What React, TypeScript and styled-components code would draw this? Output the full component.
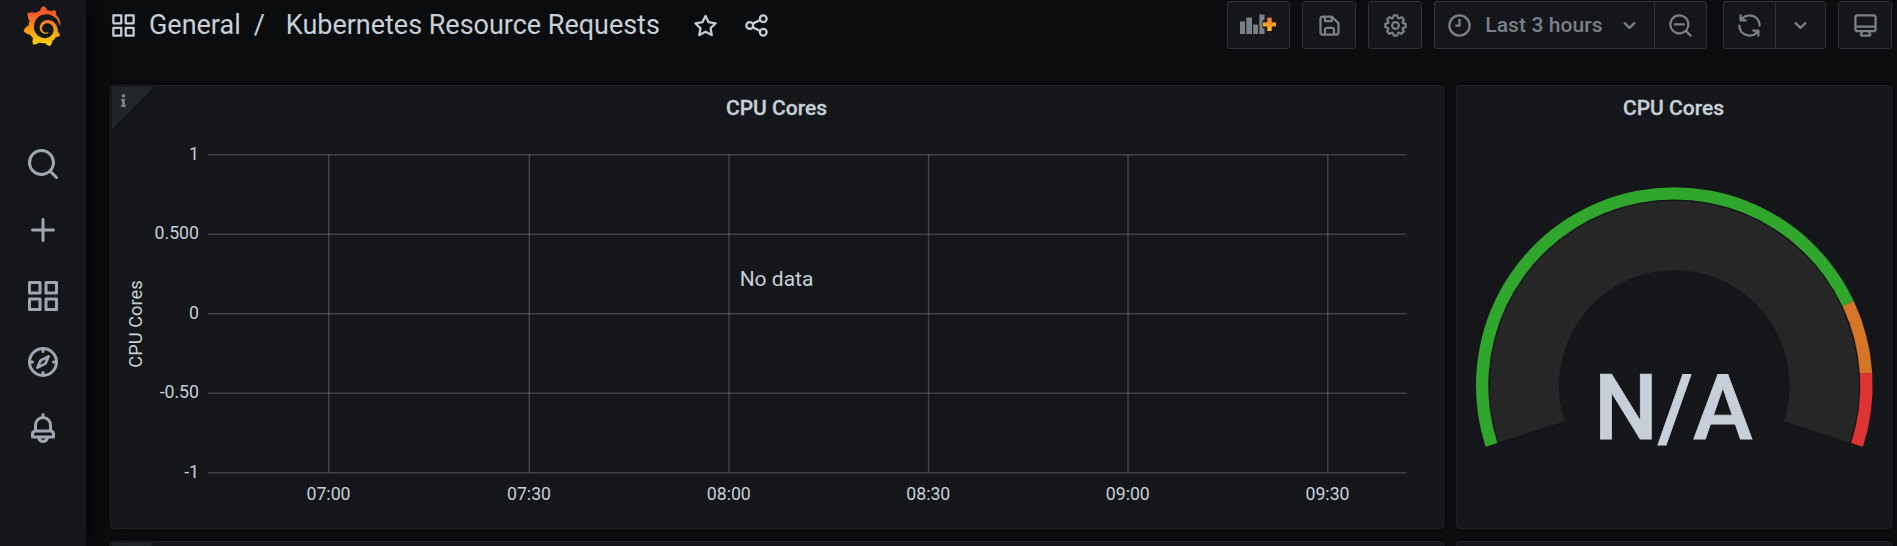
import React from 'react';
import styled, { createGlobalStyle } from 'styled-components';
import { SiGrafana } from 'react-icons/si';
import { FaInfo } from 'react-icons/fa';

const font = `Roboto, "Liberation Sans", sans-serif`;

const Global = createGlobalStyle`
  * { box-sizing: border-box; }
  body { margin: 0; background: #0b0c0e; color: #c7d0d9; font-family: ${font}; overflow: hidden; }
`;

const Layout = styled.div`
  display: flex;
  height: 546px;
  overflow: hidden;
`;

const Sidebar = styled.nav`
  position: relative;
  z-index: 1;
  flex: none;
  width: 86px;
  height: 546px;
  padding-top: 6px;
  display: flex;
  flex-direction: column;
  align-items: center;
  background: #141619;
  box-shadow: 0 0 30px #000;
`;

const Logo = styled(SiGrafana)`
  width: 40px;
  height: 40px;
  margin-right: 3px;
  margin-bottom: 85px;
  flex: none;
  path { fill: url(#logoGradient); }
`;

const Hidden = styled.svg`
  position: absolute;
  width: 0;
  height: 0;
`;

const NavItem = styled.a`
  display: grid;
  place-items: center;
  width: 86px;
  height: 66.1px;
  flex: none;
  color: #9fa7b3;
`;

const Main = styled.main`
  flex: 1;
  min-width: 0;
  padding: 0 5px 0 24px;
  display: flex;
  flex-direction: column;
`;

const Toolbar = styled.header`
  display: flex;
  align-items: flex-start;
  height: 85px;
  padding-top: 1px;
  flex: none;
`;

const Title = styled.div`
  display: flex;
  align-items: center;
  height: 48px;
  flex: 1;
  white-space: nowrap;
  font-size: 27px;
  line-height: 48px;
  letter-spacing: -0.02px;
`;

const Crumb = styled.span<{ $left: number }>`
  margin-left: ${p => p.$left}px;
`;

const TitleIcon = styled.span<{ $left: number }>`
  display: flex;
  margin-left: ${p => p.$left}px;
`;

const Button = styled.button<{ $w: number; $left?: number; $join?: 'left' | 'right' }>`
  display: flex;
  align-items: center;
  justify-content: center;
  width: ${p => p.$w}px;
  height: 48px;
  flex: none;
  margin: 0 0 0 ${p => p.$left ?? 0}px;
  padding: 0;
  border: 1px solid #2c3235;
  ${p => p.$join === 'left' && 'border-right: 0;'}
  border-radius: ${p => (p.$join === 'left' ? '3px 0 0 3px' : p.$join === 'right' ? '0 3px 3px 0' : '3px')};
  background: #141619;
  color: #7b8087;
  font: 500 21px ${font};
`;

const TimeLabel = styled.span`
  margin: 0 13px 0 12px;
  letter-spacing: 0.1px;
`;

const Grid = styled.section`
  display: grid;
  grid-template-columns: 1334px 436px;
  grid-template-rows: 444px 444px;
  gap: 12px;
`;

const Panel = styled.article`
  position: relative;
  display: flex;
  flex-direction: column;
  border: 1px solid #202226;
  border-radius: 4px;
  background: #141619;
  overflow: hidden;
`;

const PanelTitle = styled.h2`
  margin: 0 1px 0 0;
  height: 44px;
  line-height: 44px;
  text-align: center;
  font-size: 21px;
  font-weight: 500;
  -webkit-text-stroke: 0.3px currentColor;
`;

const InfoCorner = styled.div`
  position: absolute;
  top: 1px;
  left: 1px;
  width: 42px;
  height: 42px;
  padding: 7px 0 0 5px;
  background: #222529;
  clip-path: polygon(0 0, 100% 0, 0 100%);
  color: #7b8087;
  svg { display: block; width: 13px; height: 13px; }
`;

const Drawing = styled.svg`
  display: block;
  flex: none;
  font-family: ${font};
  fill: #c7d0d9;
`;

const paths = {
  search: 'M21.71,20.29,18,16.61A9,9,0,1,0,16.61,18l3.68,3.68a1,1,0,0,0,1.42,0A1,1,0,0,0,21.71,20.29ZM11,18a7,7,0,1,1,7-7A7,7,0,0,1,11,18Z',
  plus: 'M19,11H13V5a1,1,0,0,0-2,0v6H5a1,1,0,0,0,0,2h6v6a1,1,0,0,0,2,0V13h6a1,1,0,0,0,0-2Z',
  apps: 'M10,13H3a1,1,0,0,0-1,1v7a1,1,0,0,0,1,1h7a1,1,0,0,0,1-1V14A1,1,0,0,0,10,13ZM9,20H4V15H9ZM21,2H14a1,1,0,0,0-1,1v7a1,1,0,0,0,1,1h7a1,1,0,0,0,1-1V3A1,1,0,0,0,21,2ZM20,9H15V4h5Zm1,4H14a1,1,0,0,0-1,1v7a1,1,0,0,0,1,1h7a1,1,0,0,0,1-1V14A1,1,0,0,0,21,13Zm-1,7H15V15h5ZM10,2H3A1,1,0,0,0,2,3v7a1,1,0,0,0,1,1h7a1,1,0,0,0,1-1V3A1,1,0,0,0,10,2ZM9,9H4V4H9Z',
  bell: 'M18,13.18V10a6,6,0,0,0-5-5.91V3a1,1,0,0,0-2,0V4.09A6,6,0,0,0,6,10v3.18A3,3,0,0,0,4,16v2a1,1,0,0,0,1,1H8.14a4,4,0,0,0,7.72,0H19a1,1,0,0,0,1-1V16A3,3,0,0,0,18,13.18ZM8,10a4,4,0,0,1,8,0v3H8Zm4,10a2,2,0,0,1-1.72-1h3.44A2,2,0,0,1,12,20Zm6-3H6V16a1,1,0,0,1,1-1H17a1,1,0,0,1,1,1Z',
  star: 'M22,9.67A1,1,0,0,0,21.14,9l-5.69-.83L12.9,3a1,1,0,0,0-1.8,0L8.55,8.16,2.86,9a1,1,0,0,0-.81.68,1,1,0,0,0,.25,1l4.13,4-1,5.68A1,1,0,0,0,6.9,21.44L12,18.77l5.1,2.67a.93.93,0,0,0,.46.12,1,1,0,0,0,.59-.19,1,1,0,0,0,.4-1l-1-5.68,4.13-4A1,1,0,0,0,22,9.67Zm-6.15,4a1,1,0,0,0-.29.88l.72,4.2-3.76-2a1.06,1.06,0,0,0-.94,0l-3.76,2,.72-4.2a1,1,0,0,0-.29-.88l-3-3,4.21-.61a1,1,0,0,0,.76-.55L12,5.7l1.88,3.82a1,1,0,0,0,.76.55l4.21.61Z',
  share: 'M18,14a4,4,0,0,0-3.08,1.48l-5.1-2.35a3.64,3.64,0,0,0,0-2.26l5.1-2.35A4,4,0,1,0,14,6a4.17,4.17,0,0,0,.07.71L8.79,9.14a4,4,0,1,0,0,5.72l5.28,2.43A4.17,4.17,0,0,0,14,18a4,4,0,1,0,4-4ZM18,4a2,2,0,1,1-2,2A2,2,0,0,1,18,4ZM6,14a2,2,0,1,1,2-2A2,2,0,0,1,6,14Zm12,6a2,2,0,1,1,2-2A2,2,0,0,1,18,20Z',
  save: 'M20.71,9.29l-6-6a1,1,0,0,0-.32-.21A1.09,1.09,0,0,0,14,3H6A3,3,0,0,0,3,6V18a3,3,0,0,0,3,3H18a3,3,0,0,0,3-3V10A1,1,0,0,0,20.71,9.29ZM9,5h4V7H9Zm6,14H9V16a1,1,0,0,1,1-1h4a1,1,0,0,1,1,1Zm4-1a1,1,0,0,1-1,1H17V16a3,3,0,0,0-3-3H10a3,3,0,0,0-3,3v3H6a1,1,0,0,1-1-1V6A1,1,0,0,1,6,5H7V8A1,1,0,0,0,8,9h6a1,1,0,0,0,1-1V6.41l4,4Z',
  cog: 'M21.32,9.55l-1.89-.63.89-1.78A1,1,0,0,0,20.13,6L18,3.87a1,1,0,0,0-1.15-.19l-1.78.89-.63-1.89A1,1,0,0,0,13.5,2h-3a1,1,0,0,0-.95.68L8.92,4.57,7.14,3.68A1,1,0,0,0,6,3.87L3.87,6a1,1,0,0,0-.19,1.15l.89,1.78-1.89.63A1,1,0,0,0,2,10.5v3a1,1,0,0,0,.68.95l1.89.63-.89,1.78A1,1,0,0,0,3.87,18L6,20.13a1,1,0,0,0,1.15.19l1.78-.89.63,1.89a1,1,0,0,0,.95.68h3a1,1,0,0,0,.95-.68l.63-1.89,1.78.89A1,1,0,0,0,18,20.13L20.13,18a1,1,0,0,0,.19-1.15l-.89-1.78,1.89-.63A1,1,0,0,0,22,13.5v-3A1,1,0,0,0,21.32,9.55ZM20,12.78l-1.2.4A2,2,0,0,0,17.64,16l.57,1.14-1.1,1.1L16,17.64a2,2,0,0,0-2.79,1.16l-.4,1.2H11.22l-.4-1.2A2,2,0,0,0,8,17.64l-1.14.57-1.1-1.1L6.36,16A2,2,0,0,0,5.2,13.18L4,12.78V11.22l1.2-.4A2,2,0,0,0,6.36,8L5.79,6.89l1.1-1.1L8,6.36A2,2,0,0,0,10.82,5.2l.4-1.2h1.56l.4,1.2A2,2,0,0,0,16,6.36l1.14-.57,1.1,1.1L17.64,8a2,2,0,0,0,1.16,2.79l1.2.4ZM12,8a4,4,0,1,0,4,4A4,4,0,0,0,12,8Zm0,6a2,2,0,1,1,2-2A2,2,0,0,1,12,14Z',
  clock: 'M12,2A10,10,0,1,0,22,12,10,10,0,0,0,12,2Zm0,18a8,8,0,1,1,8-8A8,8,0,0,1,12,20ZM12,6a1,1,0,0,0-1,1v4H9a1,1,0,0,0,0,2h3a1,1,0,0,0,1-1V7A1,1,0,0,0,12,6Z',
  down: 'M17,9.17a1,1,0,0,0-1.41,0L12,12.71,8.46,9.17a1,1,0,0,0-1.41,0,1,1,0,0,0,0,1.42l4.24,4.24a1,1,0,0,0,1.42,0L17,10.59A1,1,0,0,0,17,9.17Z',
  zoomOut: 'M15,10H7a1,1,0,0,0,0,2h8a1,1,0,0,0,0-2Zm6.71,10.29L18,16.61A9,9,0,1,0,16.61,18l3.68,3.68a1,1,0,0,0,1.42,0A1,1,0,0,0,21.71,20.29ZM11,18a7,7,0,1,1,7-7A7,7,0,0,1,11,18Z',
  sync: 'M19.91,15.51H15.38a1,1,0,0,0,0,2h2.4A8,8,0,0,1,4,12a1,1,0,1,0-2,0,10,10,0,0,0,16.88,7.23V21a1,1,0,0,0,2,0V16.5A1,1,0,0,0,19.91,15.51ZM12,2A10,10,0,0,0,5.12,4.77V3a1,1,0,0,0-2,0V7.5a1,1,0,0,0,1,1h4.5a1,1,0,0,0,0-2H6.22A8,8,0,0,1,20,12a1,1,0,0,0,2,0A10,10,0,0,0,12,2Z',
  monitor: 'M19,2H5A3,3,0,0,0,2,5V15a3,3,0,0,0,3,3H7.64l-.58,1a2,2,0,0,0,0,2,2,2,0,0,0,1.75,1h6.46A2,2,0,0,0,17,21a2,2,0,0,0,0-2l-.59-1H19a3,3,0,0,0,3-3V5A3,3,0,0,0,19,2ZM8.77,20,10,18H14l1.2,2ZM20,15a1,1,0,0,1-1,1H5a1,1,0,0,1-1-1V14H20Zm0-3H4V5A1,1,0,0,1,5,4H19a1,1,0,0,1,1,1Z',
};

function Icon({ name, size = 27 }: { name: keyof typeof paths; size?: number }) {
  return (
    <svg width={size} height={size} viewBox="0 0 24 24" fill="currentColor">
      <path d={paths[name]} />
    </svg>
  );
}

function CompassIcon() {
  return (
    <svg width="36" height="36" viewBox="0 0 24 24" fill="none" stroke="currentColor" strokeWidth="2" strokeLinecap="round" strokeLinejoin="round">
      <circle cx="12" cy="12" r="9" />
      <path d="M12 3v2M12 19v2M3 12h2M19 12h2" />
      <path d="M15.7 8.3 13.6 13.1 8.3 15.7 10.4 10.9Z" strokeWidth="1.8" />
    </svg>
  );
}

function AddPanelIcon() {
  return (
    <svg width="37" height="22" viewBox="0 0 37 22">
      <path fill="#7b8087" d="M0 7.5h5V20H0zM6.3 3.5H12V20H6.3zM13.2 10.5H18V20h-4.8zM19.3 0.5h5.2v5.8h-2v8h2V20h-5.2z" />
      <path fill="url(#plusGradient)" d="M27.3 3.5h4.4v4.7H36v4.4h-4.3V17h-4.4v-4.4H23V8.2h4.3z" />
    </svg>
  );
}

const yTicks = [
  { label: '1', y: 25 },
  { label: '0.500', y: 104.5 },
  { label: '0', y: 184 },
  { label: '-0.50', y: 263.5 },
  { label: '-1', y: 343 },
];
const xTicks = [
  { label: '07:00', x: 217 },
  { label: '07:30', x: 417.5 },
  { label: '08:00', x: 617.3 },
  { label: '08:30', x: 816.8 },
  { label: '09:00', x: 1016.3 },
  { label: '09:30', x: 1216 },
];

function Chart() {
  return (
    <Drawing width="1332" height="398">
      <g fill="#fff" fillOpacity="0.18">
        {yTicks.map(t => <rect key={t.label} x="97" y={t.y - 1} width="1198.5" height="1.5" />)}
        {xTicks.map(t => <rect key={t.label} x={t.x} y="24.5" width="1.5" height="318" />)}
      </g>
      <g fontSize="17.7">
        {yTicks.map(t => <text key={t.label} x="88" y={t.y + 4.5} textAnchor="end">{t.label}</text>)}
        {xTicks.map(t => <text key={t.label} x={t.x + 0.5} y="369.5" textAnchor="middle">{t.label}</text>)}
        <text transform="translate(31 194) rotate(-90)" textAnchor="middle" fontSize="18.3">CPU Cores</text>
      </g>
      <text x="665.5" y="156" textAnchor="middle" fontSize="21">No data</text>
    </Drawing>
  );
}

const CX = 217.3;
const CY = 255.5;

function arc(outer: number, inner: number, from: number, to: number) {
  const pt = (r: number, f: number) => {
    const a = ((162 + f * 216) * Math.PI) / 180;
    return `${CX + r * Math.cos(a)} ${CY + r * Math.sin(a)}`;
  };
  const large = (to - from) * 216 > 180 ? 1 : 0;
  return `M${pt(outer, from)}A${outer} ${outer} 0 ${large} 1 ${pt(outer, to)}L${pt(inner, to)}A${inner} ${inner} 0 ${large} 0 ${pt(inner, from)}Z`;
}

function Gauge() {
  return (
    <Drawing width="434" height="398">
      <path d={arc(184.5, 115.3, 0, 1)} fill="#262626" />
      <path d={arc(198.3, 186, 0, 0.8)} fill="rgba(50,172,45,0.97)" />
      <path d={arc(198.3, 186, 0.8, 0.9)} fill="rgba(237,129,40,0.89)" />
      <path d={arc(198.3, 186, 0.9, 1)} fill="rgba(245,54,54,0.9)" />
      <text x={CX - 1} y="309" textAnchor="middle" fontSize="90" fontWeight="500" stroke="#c7d0d9" strokeWidth="0.8">N/A</text>
    </Drawing>
  );
}

export default function App() {
  return (
    <>
      <Global />
      <Hidden>
        <defs>
          <linearGradient id="logoGradient" x1="0" y1="1" x2="0" y2="0">
            <stop offset="0" stopColor="#fcd80f" />
            <stop offset="0.1" stopColor="#fbca0a" />
            <stop offset="0.8" stopColor="#f15b2a" />
            <stop offset="1" stopColor="#f15b2a" />
          </linearGradient>
          <linearGradient id="plusGradient" x1="0" y1="0" x2="0" y2="1">
            <stop offset="0" stopColor="#f3703a" />
            <stop offset="0.5" stopColor="#f99b2a" />
            <stop offset="1" stopColor="#fbc00f" />
          </linearGradient>
        </defs>
      </Hidden>
      <Layout>
        <Sidebar>
          <Logo />
          <NavItem><Icon name="search" size={36} /></NavItem>
          <NavItem><Icon name="plus" size={36} /></NavItem>
          <NavItem><Icon name="apps" size={36} /></NavItem>
          <NavItem><CompassIcon /></NavItem>
          <NavItem><Icon name="bell" size={36} /></NavItem>
        </Sidebar>
        <Main>
          <Toolbar>
            <Title>
              <TitleIcon $left={0}><Icon name="apps" /></TitleIcon>
              <Crumb $left={12}>General</Crumb>
              <Crumb $left={13}>/</Crumb>
              <Crumb $left={21}>Kubernetes Resource Requests</Crumb>
              <TitleIcon $left={32}><Icon name="star" /></TitleIcon>
              <TitleIcon $left={24}><Icon name="share" /></TitleIcon>
            </Title>
            <Button $w={63}><AddPanelIcon /></Button>
            <Button $w={54} $left={12}><Icon name="save" /></Button>
            <Button $w={54} $left={12}><Icon name="cog" /></Button>
            <Button $w={220} $left={12} $join="left">
              <Icon name="clock" />
              <TimeLabel>Last 3 hours</TimeLabel>
              <Icon name="down" />
            </Button>
            <Button $w={53} $join="right"><Icon name="zoomOut" /></Button>
            <Button $w={52} $left={16} $join="left"><Icon name="sync" /></Button>
            <Button $w={51} $join="right"><Icon name="down" /></Button>
            <Button $w={54} $left={12}><Icon name="monitor" /></Button>
          </Toolbar>
          <Grid>
            <Panel>
              <InfoCorner><FaInfo /></InfoCorner>
              <PanelTitle>CPU Cores</PanelTitle>
              <Chart />
            </Panel>
            <Panel>
              <PanelTitle>CPU Cores</PanelTitle>
              <Gauge />
            </Panel>
            <Panel><InfoCorner /></Panel>
            <Panel />
          </Grid>
        </Main>
      </Layout>
    </>
  );
}
